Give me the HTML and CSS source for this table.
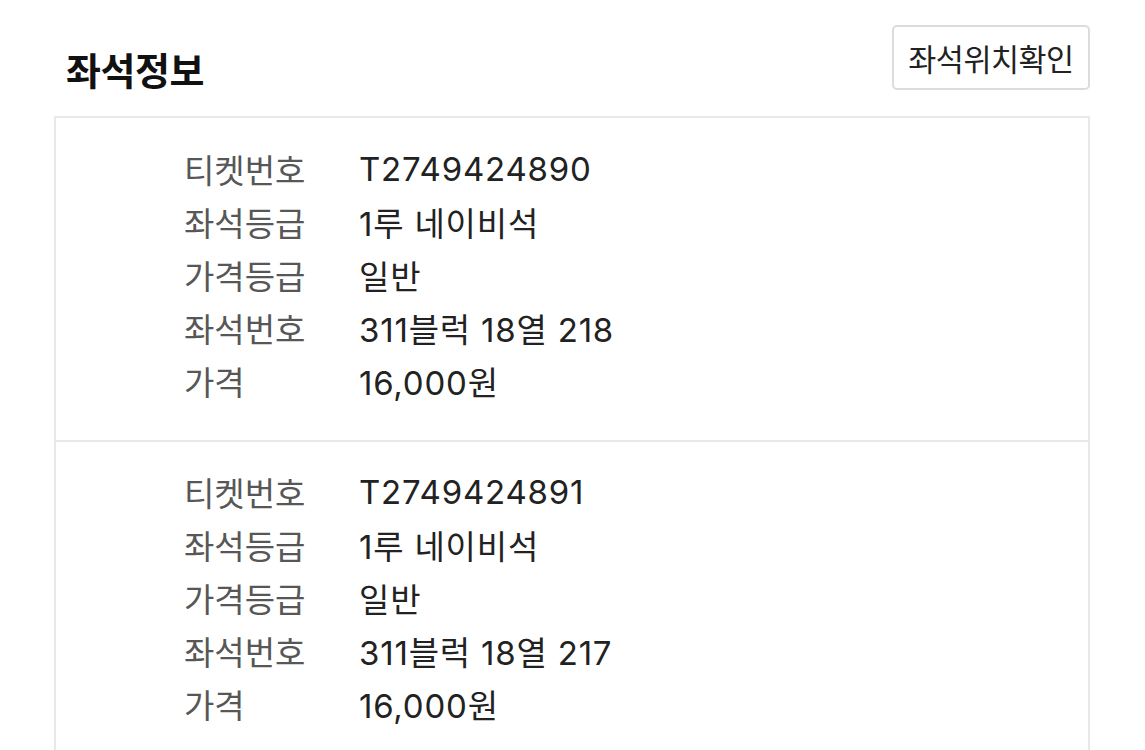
FILE: index.html
```html
<!DOCTYPE html>
<html lang="ko">
<head>
<meta charset="utf-8">
<link rel="stylesheet" href="styles.css">
</head>
<body>
<section class="seat">
  <header class="seat-head">
    <h2 class="seat-title">좌석정보</h2>
    <button class="seat-btn" type="button">좌석위치확인</button>
  </header>
  <div class="seat-box">
    <dl class="ticket">
      <div class="row"><dt>티켓번호</dt><dd>T2749424890</dd></div>
      <div class="row"><dt>좌석등급</dt><dd>1루 네이비석</dd></div>
      <div class="row"><dt>가격등급</dt><dd>일반</dd></div>
      <div class="row"><dt>좌석번호</dt><dd>311블럭 18열 218</dd></div>
      <div class="row"><dt>가격</dt><dd>16,000원</dd></div>
    </dl>
    <dl class="ticket">
      <div class="row"><dt>티켓번호</dt><dd>T2749424891</dd></div>
      <div class="row"><dt>좌석등급</dt><dd>1루 네이비석</dd></div>
      <div class="row"><dt>가격등급</dt><dd>일반</dd></div>
      <div class="row"><dt>좌석번호</dt><dd>311블럭 18열 217</dd></div>
      <div class="row"><dt>가격</dt><dd>16,000원</dd></div>
    </dl>
  </div>
</section>
</body>
</html>
```
FILE: styles.css
```css
html, body {
  margin: 0;
  padding: 0;
  background: #fff;
}
body {
  font-family: "Noto Sans CJK KR", "Noto Sans", sans-serif;
  color: #222;
}
.seat {
  padding: 24px 55px 0 54px;
}
.seat-head {
  display: flex;
  justify-content: space-between;
  align-items: flex-start;
  height: 92px;
}
.seat-title {
  margin: 22px 0 0 12px;
  font-size: 38px;
  font-weight: 700;
  line-height: 46px;
  color: #111;
  letter-spacing: -0.5px;
}
.seat-btn {
  margin: 1px 0 0 0;
  height: 65px;
  width: 198px;
  padding: 0;
  border: 2px solid #dcdcdc;
  border-radius: 5px;
  background: #fff;
  font-family: "Noto Sans CJK KR", sans-serif;
  font-size: 30.5px;
  color: #222;
  letter-spacing: -0.5px;
}
.seat-box {
  border: 2px solid #e8e8e8;
  border-bottom: none;
}
.ticket {
  margin: 0;
  padding: 24px 0 33px 128px;
}
.ticket + .ticket {
  padding-top: 23px;
  border-top: 2px solid #e8e8e8;
}
.row {
  display: flex;
  height: 53px;
  align-items: center;
  font-size: 33px;
}
.row dt {
  width: 175px;
  color: #575757;
}
.row dd {
  margin: 0;
  color: #222;
  font-family: Inter, "Noto Sans CJK KR", sans-serif;
  font-size: 33px;
  letter-spacing: 0.8px;
}
```
